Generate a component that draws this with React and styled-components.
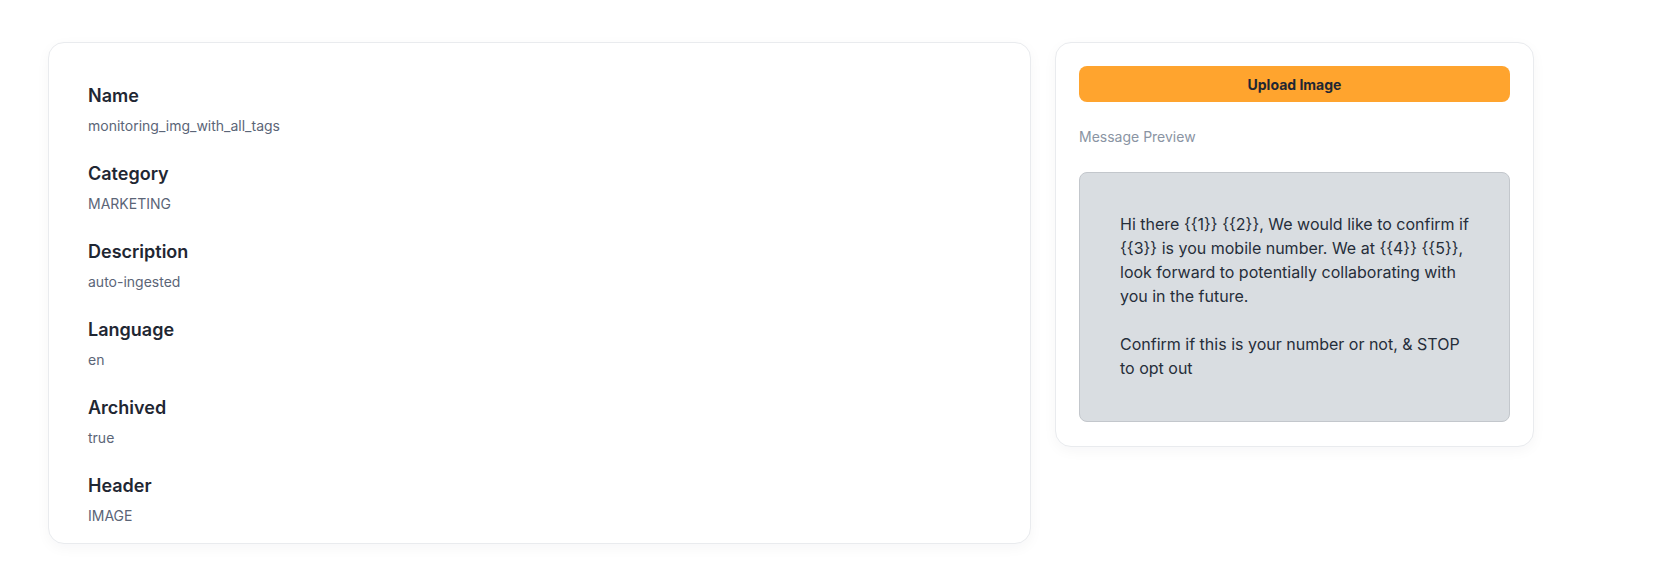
import styled, { createGlobalStyle } from "styled-components";

const GlobalStyle = createGlobalStyle`
    html, body {
        margin: 0;
        padding: 0;
        background: #ffffff;
        font-family: Inter, "Noto Sans", sans-serif;
    }
    * { box-sizing: border-box; }
`;

const Page = styled.div`
    display: flex;
    align-items: flex-start;
    gap: 24px;
    padding: 42px 0 0 48px;
    height: 562px;
    overflow: hidden;
`;

const Card = styled.div`
    width: ${props => props.width};
    background: #ffffff;
    border: 1px solid #e9ebee;
    border-radius: 16px;
    box-shadow: 0 4px 14px rgba(17, 24, 39, 0.04);
    display: flex;
    flex-direction: column;
`;

const DetailsCard = styled(Card)`
    padding: 39px 39px 17px;
    gap: 24px;
`;

const PreviewCard = styled(Card)`
    padding: 23px 23px 24px;
    gap: 24px;
`;

const Field = styled.div`
    display: flex;
    flex-direction: column;
    gap: 6px;
`;

const Label = styled.h3`
    margin: 0;
    font-size: 18px;
    line-height: 28px;
    font-weight: 600;
    color: #1f2733;
`;

const Value = styled.p`
    margin: 0;
    font-size: 14px;
    line-height: 20px;
    color: #5b6577;
`;

const UploadButton = styled.button`
    height: 36px;
    width: 100%;
    border: none;
    border-radius: 8px;
    background: #ffa42e;
    color: #1f2733;
    font-family: inherit;
    font-size: 14px;
    font-weight: 700;
    cursor: pointer;
`;

const Caption = styled.span`
    font-size: 14px;
    line-height: 22px;
    color: #8a94a3;
`;

const PreviewBox = styled.div`
    background: #d9dde1;
    border: 1px solid #c3c7cc;
    border-radius: 8px;
    padding: 39px 40px 41px;
    font-size: 16px;
    line-height: 24px;
    color: #262e3a;
    white-space: pre-wrap;
`;

const fields = [
    { label: "Name", value: "monitoring_img_with_all_tags" },
    { label: "Category", value: "MARKETING" },
    { label: "Description", value: "auto-ingested" },
    { label: "Language", value: "en" },
    { label: "Archived", value: "true" },
    { label: "Header", value: "IMAGE" },
];

const message =
    "Hi there {{1}} {{2}}, We would like to confirm if {{3}} is you mobile number. We at {{4}} {{5}}, look forward to potentially collaborating with you in the future.\n\nConfirm if this is your number or not, & STOP to opt out";

export default function App() {
    return (
        <>
            <GlobalStyle />
            <Page>
                <DetailsCard width="983px">
                    {fields.map(f => (
                        <Field key={f.label}>
                            <Label>{f.label}</Label>
                            <Value>{f.value}</Value>
                        </Field>
                    ))}
                </DetailsCard>
                <PreviewCard width="479px">
                    <UploadButton>Upload Image</UploadButton>
                    <Caption>Message Preview</Caption>
                    <PreviewBox>{message}</PreviewBox>
                </PreviewCard>
            </Page>
        </>
    );
}
